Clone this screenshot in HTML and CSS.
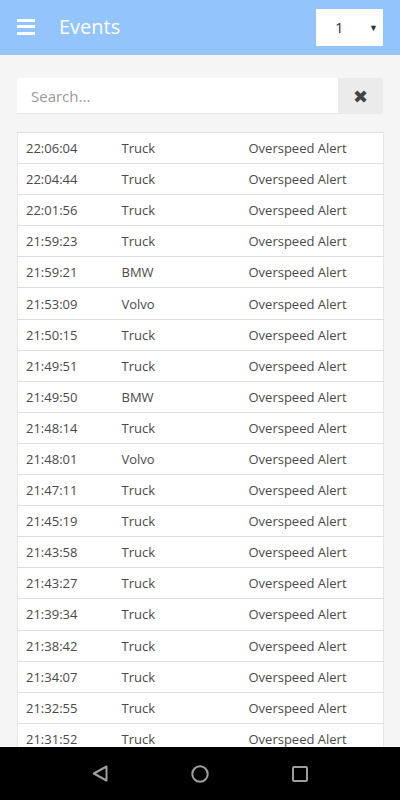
FILE: index.html
```html
<!DOCTYPE html>
<html>
<head>
<meta charset="utf-8">
<link rel="stylesheet" href="styles.css">
</head>
<body>
<div class="app">
  <header class="topbar">
    <span class="menu"><i></i><i></i><i></i></span>
    <h1 class="title">Events</h1>
    <div class="select"><span>1</span><span class="caret">&#9660;</span></div>
  </header>
  <main class="content">
    <div class="search">
      <div class="search-input">Search...</div>
      <div class="search-clear">&#10006;</div>
    </div>
    <table class="events">
      <colgroup><col class="c1"><col class="c2"><col class="c3"></colgroup>
      <tbody>
        <tr><td>22:06:04</td><td>Truck</td><td>Overspeed Alert</td></tr>
        <tr><td>22:04:44</td><td>Truck</td><td>Overspeed Alert</td></tr>
        <tr><td>22:01:56</td><td>Truck</td><td>Overspeed Alert</td></tr>
        <tr><td>21:59:23</td><td>Truck</td><td>Overspeed Alert</td></tr>
        <tr><td>21:59:21</td><td>BMW</td><td>Overspeed Alert</td></tr>
        <tr><td>21:53:09</td><td>Volvo</td><td>Overspeed Alert</td></tr>
        <tr><td>21:50:15</td><td>Truck</td><td>Overspeed Alert</td></tr>
        <tr><td>21:49:51</td><td>Truck</td><td>Overspeed Alert</td></tr>
        <tr><td>21:49:50</td><td>BMW</td><td>Overspeed Alert</td></tr>
        <tr><td>21:48:14</td><td>Truck</td><td>Overspeed Alert</td></tr>
        <tr><td>21:48:01</td><td>Volvo</td><td>Overspeed Alert</td></tr>
        <tr><td>21:47:11</td><td>Truck</td><td>Overspeed Alert</td></tr>
        <tr><td>21:45:19</td><td>Truck</td><td>Overspeed Alert</td></tr>
        <tr><td>21:43:58</td><td>Truck</td><td>Overspeed Alert</td></tr>
        <tr><td>21:43:27</td><td>Truck</td><td>Overspeed Alert</td></tr>
        <tr><td>21:39:34</td><td>Truck</td><td>Overspeed Alert</td></tr>
        <tr><td>21:38:42</td><td>Truck</td><td>Overspeed Alert</td></tr>
        <tr><td>21:34:07</td><td>Truck</td><td>Overspeed Alert</td></tr>
        <tr><td>21:32:55</td><td>Truck</td><td>Overspeed Alert</td></tr>
        <tr><td>21:31:52</td><td>Truck</td><td>Overspeed Alert</td></tr>
      </tbody>
    </table>
  </main>
  <nav class="navbar">
    <svg width="16" height="17" viewBox="0 0 16 17"><path d="M14.5 1.5 L1.8 8.5 L14.5 15.5 Z" fill="none" stroke="#9e9e9e" stroke-width="2" stroke-linejoin="round"/></svg>
    <svg width="18" height="18" viewBox="0 0 18 18"><circle cx="9" cy="9" r="7.7" fill="none" stroke="#9e9e9e" stroke-width="2"/></svg>
    <svg width="16" height="16" viewBox="0 0 16 16"><rect x="1" y="1" width="14" height="14" rx="1" fill="none" stroke="#9e9e9e" stroke-width="2"/></svg>
  </nav>
</div>
</body>
</html>
```
FILE: styles.css
```css
* { box-sizing: border-box; }
html, body { margin: 0; padding: 0; height: 100%; overflow: hidden; }
body { font-family: "Open Sans", "Noto Sans", sans-serif; background: #f5f5f5; color: #4a4a4a; }
.app { height: 800px; display: flex; flex-direction: column; }
.topbar {
  height: 55px; flex: none; background: #93c4fb;
  display: flex; align-items: center; padding: 0 17px;
}
.menu { width: 18px; height: 16px; display: flex; flex-direction: column; justify-content: space-between; margin-top: -2px; }
.menu i { display: block; height: 3px; background: #fff; border-radius: 0.5px; }
.title { margin: 0 0 0 24px; font-size: 20px; font-weight: 400; color: #fff; flex: 1; line-height: 1; margin-top: -2px; }
.select {
  width: 67px; height: 37px; background: #fff; display: flex; align-items: center;
  justify-content: space-between; padding: 0 5px 0 19px; margin-top: -1px;
  font-size: 15px; color: #333;
}
.select .caret { font-size: 9px; color: #333; }
.content { flex: 1; overflow: hidden; padding: 23px 17px 0; }
.search { display: flex; height: 36px; margin-bottom: 18px; }
.search-input {
  flex: 1; background: #fff; display: flex; align-items: center; padding-left: 14px;
  font-size: 15px; color: #999; border-bottom: 1px solid #e6e6e6;
}
.search-clear {
  width: 45px; background: #ebebeb; display: flex; align-items: center; justify-content: center;
  font-size: 18px; color: #444;
}
.events { width: 100%; border-collapse: collapse; background: #fff; table-layout: fixed; }
.c1 { width: 96px; } .c2 { width: 127px; } .c3 { width: 143px; }
.events tr { height: 31.1px; }
.events td {
  padding: 0 8px; border: 1px solid #dedede; border-left-color: #e6e6e6; border-right-color: #e6e6e6;
  font-size: 13px; color: #4a4a4a; white-space: nowrap; vertical-align: middle;
}
.events td + td { border-left: none; }
.events td:not(:last-child) { border-right: none; }
.navbar {
  height: 53px; flex: none; background: #000;
  display: grid; grid-template-columns: repeat(3, 100px); justify-items: center; align-items: center;
  padding: 0 50px;
}
.navbar svg { display: block; }
```
